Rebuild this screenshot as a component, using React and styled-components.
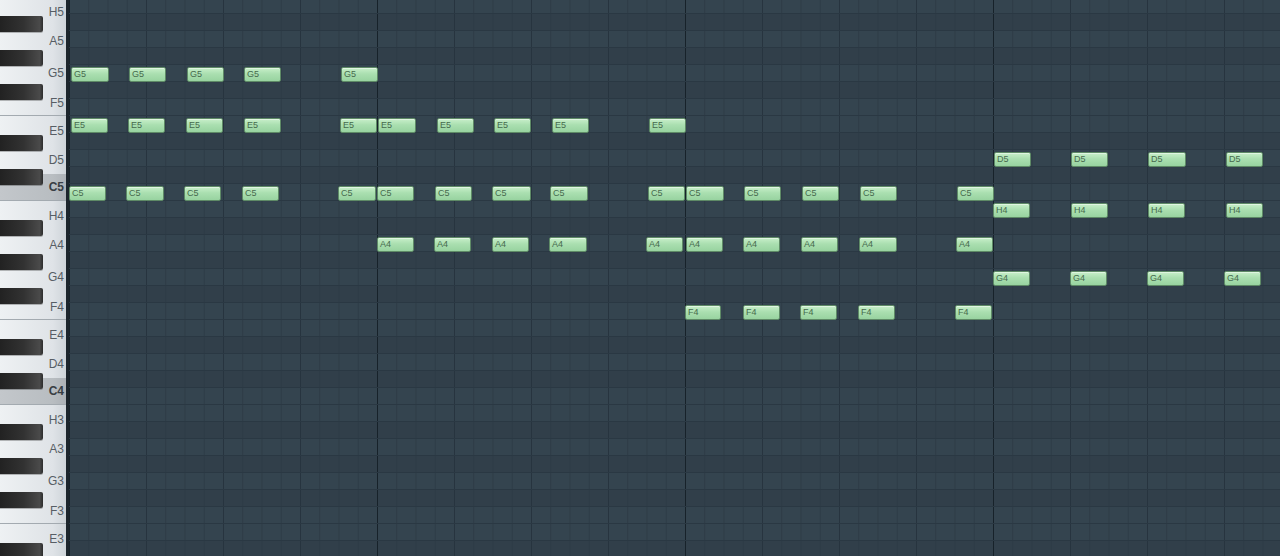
import React from "react";
import styled, { createGlobalStyle } from "styled-components";

const ROW = 17;
const GRID_X = 69;

const GlobalStyle = createGlobalStyle`
    html, body {
        margin:0;
        padding:0;
        height:556px;
        overflow:hidden;
        background-color:#33434e;
        font-family:"Liberation Sans", Arial, sans-serif;
    }
`

const Roll = styled.div`
    display:flex;
    width:1280px;
    height:556px;
    overflow:hidden;
`

const Keyboard = styled.div`
    width:66px;
    flex:none;
    border-right:3px solid #1c252c;
    overflow:hidden;
    background:linear-gradient(to right, #eef1f3 0%, #dde2e6 80%, #cdd3d8 100%);
`

const KeyStack = styled.div`
    position:relative;
    display:flex;
    flex-direction:column;
    margin-top:-3px;
`

const WhiteKey = styled.div`
    box-sizing:border-box;
    flex:none;
    height:${(props) => props.$h}px;
    display:flex;
    align-items:center;
    justify-content:flex-end;
    padding-right:2px;
    padding-top:${(props) => props.$shift || 0}px;
    background:${(props) => props.$root
        ? "linear-gradient(to right, #c3c7cb 0%, #b8bdc1 80%, #adb2b7 100%)"
        : "linear-gradient(to right, #eef1f3 0%, #dfe3e7 80%, #ced4d9 100%)"};
    border-bottom:${(props) => props.$edge ? "1px solid #a3aab0" : "none"};
`

const KeyLabel = styled.span`
    font-size:12px;
    color:${(props) => props.$root ? "#383e44" : "#575e65"};
    font-weight:${(props) => props.$root ? "bold" : "normal"};
`

const BlackKey = styled.div`
    position:absolute;
    left:0;
    width:43px;
    height:16px;
    border-radius:0 2px 2px 0;
    background:linear-gradient(to right, #222222 0%, #323232 55%, #4a4a4a 92%, #2c2c2c 100%);
    box-shadow:0 1px 0 rgba(0,0,0,0.25);
`

const Grid = styled.div`
    position:relative;
    flex:1;
    overflow:hidden;
`

const RowStack = styled.div`
    position:relative;
    display:flex;
    flex-direction:column;
    margin-top:-3px;
`

const Row = styled.div`
    box-sizing:border-box;
    flex:none;
    height:${ROW}px;
    border-bottom:1px solid #2a3843;
    background-color:${(props) => props.$black ? "#313f4a" : "#34444f"};
    background-image:
        linear-gradient(to right, #17222a 1px, transparent 1px),
        linear-gradient(to right, #27343f 1px, transparent 1px),
        linear-gradient(to right, #2d3b46 1px, transparent 1px);
    background-size:308px 100%, 77px 100%, 19.25px 100%;
`

const Note = styled.div`
    position:absolute;
    box-sizing:border-box;
    height:15px;
    padding-left:2px;
    border:1px solid #5e8a66;
    border-radius:2px;
    background:linear-gradient(to bottom, #c8efca 0%, #aadfb0 45%, #98d3a0 100%);
    box-shadow:inset 0 1px 0 rgba(255,255,255,0.45);
    font-size:9px;
    line-height:13px;
    color:#466a4d;
    white-space:nowrap;
    overflow:hidden;
`

// top to bottom inside one octave
const WHITE = [
    { n: "H", h: 29 },
    { n: "A", h: 30 },
    { n: "G", h: 30, shift: 3 },
    { n: "F", h: 30, shift: 4, edge: true },
    { n: "E", h: 29 },
    { n: "D", h: 29 },
    { n: "C", h: 27, edge: true },
];
const BLACK_ROWS = [1, 3, 5, 8, 10];
const OCTAVES = [5, 4, 3];
const LAST_KEY = "E3"; // the view ends just below this key

// row index counted from H5
const rowOf = { G5: 4, E5: 7, D5: 9, C5: 11, H4: 12, A4: 14, G4: 16, F4: 18 };

const NOTES = {
    G5: [[71, 109], [129, 166], [187, 224], [244, 281], [341, 378]],
    E5: [[71, 108], [128, 165], [186, 223], [244, 281], [340, 377], [378, 416], [437, 474], [494, 531], [552, 589], [649, 686]],
    C5: [[69, 106], [126, 164], [184, 221], [242, 279], [338, 376], [377, 414], [435, 472], [492, 531], [550, 588], [648, 685], [686, 724], [744, 781], [802, 839], [860, 897], [957, 994]],
    D5: [[994, 1031], [1071, 1108], [1148, 1186], [1226, 1263]],
    H4: [[993, 1030], [1071, 1108], [1148, 1185], [1226, 1263]],
    A4: [[377, 414], [434, 471], [492, 529], [549, 587], [646, 683], [686, 723], [743, 780], [801, 838], [859, 897], [956, 993]],
    G4: [[993, 1030], [1070, 1107], [1147, 1184], [1224, 1261]],
    F4: [[685, 721], [743, 780], [800, 837], [858, 895], [955, 992]],
};

const Piano = () => {
    const keys = [];
    let past = false;
    OCTAVES.forEach((o) => {
        WHITE.forEach((k) => {
            const name = k.n + o;
            keys.push(
                <WhiteKey key={name} $h={k.h} $shift={k.shift} $edge={k.edge} $root={k.n === "C" && !past}>
                    {!past && <KeyLabel $root={k.n === "C"}>{name}</KeyLabel>}
                </WhiteKey>
            );
            if (name === LAST_KEY) past = true;
        });
    });
    return (
        <Keyboard>
            <KeyStack>
                {keys}
                {OCTAVES.map((o, oi) =>
                    BLACK_ROWS.map((r) => (
                        <BlackKey key={o + "-" + r} style={{ top: (oi * 12 + r) * ROW + 2 }} />
                    ))
                )}
            </KeyStack>
        </Keyboard>
    )
}

const NoteGrid = () => {
    const rows = [];
    for (let i = 0; i < OCTAVES.length * 12; i++) {
        rows.push(<Row key={i} $black={BLACK_ROWS.includes(i % 12)} />);
    }
    return (
        <Grid>
            <RowStack>
                {rows}
                {Object.keys(NOTES).map((name) =>
                    NOTES[name].map(([a, b], i) => (
                        <Note
                            key={name + i}
                            style={{ top: rowOf[name] * ROW + 2, left: a - GRID_X, width: b - a }}
                        >
                            {name}
                        </Note>
                    ))
                )}
            </RowStack>
        </Grid>
    )
}

const App = () => {
    return (
        <>
            <GlobalStyle />
            <Roll>
                <Piano />
                <NoteGrid />
            </Roll>
        </>
    )
}

export default App;
